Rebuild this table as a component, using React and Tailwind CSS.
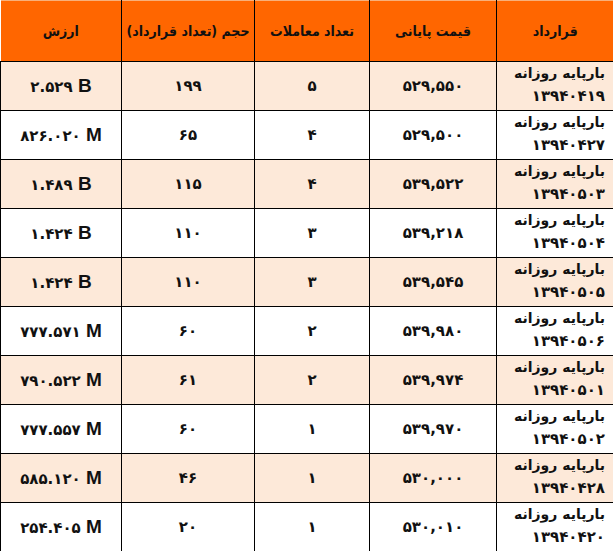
const toFa = (s) => s.replace(/[0-9]/g, (d) => "۰۱۲۳۴۵۶۷۸۹"[d]);

const rows = [
  { value: "2.529", unit: "B", volume: "199", count: "5", price: "529,550", date: "13940419" },
  { value: "826.020", unit: "M", volume: "65", count: "4", price: "529,500", date: "13940427" },
  { value: "1.489", unit: "B", volume: "115", count: "4", price: "539,522", date: "13940503" },
  { value: "1.424", unit: "B", volume: "110", count: "3", price: "539,218", date: "13940504" },
  { value: "1.424", unit: "B", volume: "110", count: "3", price: "539,545", date: "13940505" },
  { value: "777.571", unit: "M", volume: "60", count: "2", price: "539,980", date: "13940506" },
  { value: "790.522", unit: "M", volume: "61", count: "2", price: "539,974", date: "13940501" },
  { value: "777.557", unit: "M", volume: "60", count: "1", price: "539,970", date: "13940502" },
  { value: "585.120", unit: "M", volume: "46", count: "1", price: "530,000", date: "13940428" },
  { value: "254.405", unit: "M", volume: "20", count: "1", price: "530,010", date: "13940420" },
];

const headers = ["قرارداد", "قیمت پایانی", "تعداد معاملات", "حجم (تعداد قرارداد)", "ارزش"];
const widths = ["w-[117px]", "w-[127px]", "w-[115px]", "w-[133px]", "w-[121px]"];

export default function App() {
  return (
    <div className="w-[613px] h-[551px] overflow-hidden bg-white font-['DejaVu_Sans',sans-serif] text-[#111]">
      <table dir="rtl" className="w-[613px] border-collapse table-fixed">
        <thead>
          <tr className="h-[61px] bg-[#ff6600] border-t border-[#f8b07a]">
            {headers.map((h, i) => (
              <th
                key={i}
                className={`${widths[i]} ${i < 4 ? "border-l border-black" : ""} text-center text-[14px] font-bold p-0 whitespace-nowrap font-['DejaVu_Sans_Condensed','DejaVu_Sans',sans-serif]`}
              >
                {h}
              </th>
            ))}
          </tr>
        </thead>
        <tbody>
          {rows.map((r, i) => (
            <tr key={i} className={`h-[49px] ${i % 2 === 0 ? "bg-[#fde9d9]" : "bg-white"}`}>
              <td className="border border-black border-r-[#9a9a9a] text-right align-top pr-[8px] p-0 text-[14px] leading-[23px]">
                <div className="font-semibold">بارپایه روزانه</div>
                <div className="font-bold text-[15px]">{toFa(r.date)}</div>
              </td>
              <td className="border border-black text-center text-[15px] font-bold p-0">{toFa(r.price)}</td>
              <td className="border border-black text-center text-[15px] font-bold p-0">{toFa(r.count)}</td>
              <td className="border border-black text-center text-[15px] font-bold p-0">{toFa(r.volume)}</td>
              <td className="border border-black text-center text-[15px] font-bold p-0">
                <span dir="ltr">
                  {toFa(r.value)}{" "}
                  <span className="font-['Liberation_Sans',sans-serif] text-[19px]">{r.unit}</span>
                </span>
              </td>
            </tr>
          ))}
        </tbody>
      </table>
    </div>
  );
}
